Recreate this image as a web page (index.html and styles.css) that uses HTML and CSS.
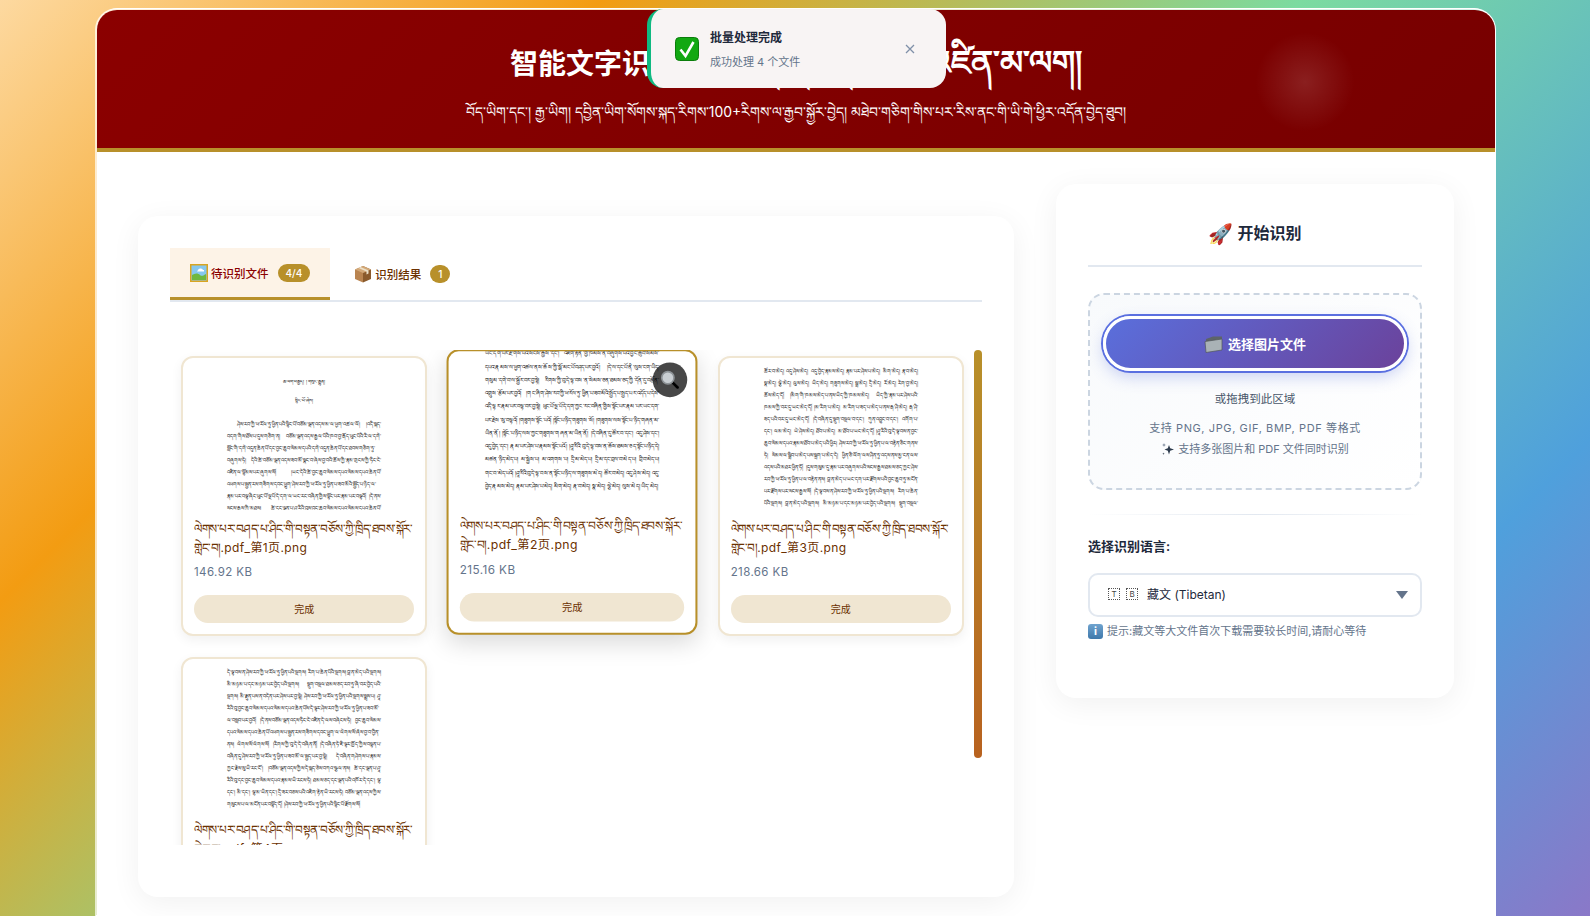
FILE: index.html
```html
<!DOCTYPE html>
<html lang="zh-CN">
<head>
    <meta charset="UTF-8">
    <meta name="viewport" content="width=device-width, initial-scale=1.0">
    <title>智能文字识别系统</title>
    <link rel="stylesheet" href="styles.css">
</head>
<body>
    <div class="container">
        <header class="header">
            <h1>智能文字识别系统<span class="title-bo">ཡིག་གཟུགས་ངོས་འཛིན་མ་ལག།</span></h1>
            <p>བོད་ཡིག་དང་། རྒྱ་ཡིག། དབྱིན་ཡིག་སོགས་སྐད་རིགས་100+རིགས་ལ་རྒྱབ་སྐྱོར་བྱེད། མཐེབ་གཅིག་གིས་པར་རིས་ནང་གི་ཡི་གེ་ཕྱིར་འདོན་བྱེད་ཐུབ།</p>
            <div class="glow"></div>
        </header>

        <div class="toast">
            <svg class="toast-icon" viewBox="0 0 24 24">
                <rect x="0.5" y="0.5" width="23" height="23" rx="4" fill="#12a812" stroke="#0b7d0b"/>
                <path d="M5.5 12.5l5 6.5 8-14" fill="none" stroke="#fff" stroke-width="2.6"/>
            </svg>
            <div class="toast-text">
                <strong>批量处理完成</strong>
                <span>成功处理 4 个文件</span>
            </div>
            <svg class="toast-close" viewBox="0 0 10 10">
                <path d="M1 1l8 8M9 1l-8 8" stroke="#8090a8" stroke-width="1.3"/>
            </svg>
        </div>

        <main class="main">
            <section class="files-panel">
                <div class="tabs">
                    <div class="tab active">
                        <svg class="tab-icon" viewBox="0 0 18 18">
                            <rect x="0.5" y="0.5" width="17" height="17" fill="#87c8ee" stroke="#d9a520" stroke-width="2"/>
                            <path d="M2 11c3-2 6-2 8 0s4 0 6-1v6H2z" fill="#6fb83f"/>
                            <path d="M8 6c1-2 4-2 5 0h1v1.500H7z" fill="#fff"/>
                        </svg>
                        待识别文件 <span class="badge">4/4</span>
                    </div>
                    <div class="tab">
                        <svg class="tab-icon" viewBox="0 0 18 18">
                            <path d="M9 1l8 3.500v9.500l-8 3.500z" fill="#8a5a2c"/>
                            <path d="M9 1l-8 3.500v9.500l8 3.500z" fill="#b98450"/>
                            <path d="M1 4.500l8 3.500 8-3.500-8-3.500z" fill="#d3a878"/>
                            <path d="M4.500 3l8 3.500v3l2-1v-3l-8-3.500z" fill="#ece0c8"/>
                        </svg>
                        识别结果 <span class="badge single">1</span>
                    </div>
                </div>
                <div class="list-wrap">
                    <div class="file-list">
                        <div class="file-card">
                            <div class="thumb first-page">
                                <div class="page-title">ཆ་ལག་བརྒྱད། ། གསུང་རྒྱུན།</div>
                                <div class="page-title">སྙིང་པོ་ཞེས།</div>
                                <p>ཤེས་རབ་ཀྱི་ཕ་རོལ་ཏུ་ཕྱིན་པའི་སྙིང་པོ་བཅོམ་ལྡན་འདས་མ་ལ་ཕྱག་འཚལ་ལོ། །འདི་སྐད་བདག་གིས་ཐོས་པ་དུས་གཅིག་ན། བཅོམ་ལྡན་འདས་རྒྱལ་པོའི་ཁབ་བྱ་རྒོད་ཕུང་པོའི་རི་ལ་དགེ་སློང་གི་དགེ་འདུན་ཆེན་པོ་དང་བྱང་ཆུབ་སེམས་དཔའི་དགེ་འདུན་ཆེན་པོ་དང་ཐབས་གཅིག་ཏུ་བཞུགས་ཏེ། དེའི་ཚེ་བཅོམ་ལྡན་འདས་ཟབ་མོ་སྣང་བ་ཞེས་བྱ་བའི་ཆོས་ཀྱི་རྣམ་གྲངས་ཀྱི་ཏིང་ངེ་འཛིན་ལ་སྙོམས་པར་ཞུགས་སོ། །ཡང་དེའི་ཚེ་བྱང་ཆུབ་སེམས་དཔའ་སེམས་དཔའ་ཆེན་པོ་འཕགས་པ་སྤྱན་རས་གཟིགས་དབང་ཕྱུག་ཤེས་རབ་ཀྱི་ཕ་རོལ་ཏུ་ཕྱིན་པ་ཟབ་མོའི་སྤྱོད་པ་ཉིད་ལ་རྣམ་པར་བལྟ་ཞིང་ཕུང་པོ་ལྔ་པོ་དེ་དག་ལ་ཡང་རང་བཞིན་གྱིས་སྟོང་པར་རྣམ་པར་བལྟའོ། །དེ་ནས་སངས་རྒྱས་ཀྱི་མཐུས། ཚེ་དང་ལྡན་པ་ཤཱ་རིའི་བུས་བྱང་ཆུབ་སེམས་དཔའ་སེམས་དཔའ་ཆེན་པོ་འཕགས་པ་སྤྱན་རས་གཟིགས་དབང་ཕྱུག་ལ་འདི་སྐད་ཅེས་སྨྲས་སོ།</p>
                            </div>
                            <div class="file-name"><span class="name-bo">ལེགས་པར་བཤད་པ་ཤིང་གི་བསྟན་བཅོས་ཀྱི་ཁྲིད་ཐབས་སྐོར་གླེང་བ།</span><span class="name-ext">.pdf_第1页.png</span></div>
                            <div class="file-size">146.92 KB</div>
                            <div class="status-btn">完成</div>
                        </div>

                        <div class="file-card hovered">
                            <div class="thumb cropped-page">
                                <p>ཡང་དག་པར་རྫོགས་པའི་སངས་རྒྱས་དང་། འཇིག་རྟེན་གྱི་ཁམས་ན་བཞུགས་པའི་བྱང་ཆུབ་སེམས་དཔའ་རྣམས་ལ་ཕྱག་འཚལ་ནས་ཆོས་ཀྱི་སྒོ་མང་པོ་བཤད་པར་བྱའོ། །དེ་ལ་དང་པོ་ནི་ལུས་ངག་ཡིད་གསུམ་དགེ་བ་ལ་སྦྱོར་བར་བྱ་སྟེ། རིགས་ཀྱི་བུ་དེ་ལྟ་བས་ན་སེམས་ཅན་ཐམས་ཅད་ཀྱི་དོན་དུ་བརྩོན་འགྲུས་རྩོམ་པར་བྱའོ། །གང་ཞིག་ཤེས་རབ་ཀྱི་ཕ་རོལ་ཏུ་ཕྱིན་པ་ཟབ་མོའི་སྤྱོད་པ་སྤྱད་པར་འདོད་པ་དེས་འདི་ལྟར་རྣམ་པར་བལྟ་བར་བྱ་སྟེ། ཕུང་པོ་ལྔ་པོ་དེ་དག་ཀྱང་རང་བཞིན་གྱིས་སྟོང་པར་རྣམ་པར་ཡང་དག་པར་རྗེས་སུ་བལྟའོ། །གཟུགས་སྟོང་པའོ། །སྟོང་པ་ཉིད་གཟུགས་སོ། །གཟུགས་ལས་སྟོང་པ་ཉིད་གཞན་མ་ཡིན་ནོ། །སྟོང་པ་ཉིད་ལས་ཀྱང་གཟུགས་གཞན་མ་ཡིན་ནོ། །དེ་བཞིན་དུ་ཚོར་བ་དང་། འདུ་ཤེས་དང་། འདུ་བྱེད་དང་། རྣམ་པར་ཤེས་པ་རྣམས་སྟོང་པའོ། །ཤཱ་རིའི་བུ་དེ་ལྟ་བས་ན་ཆོས་ཐམས་ཅད་སྟོང་པ་ཉིད་དེ། མཚན་ཉིད་མེད་པ། མ་སྐྱེས་པ། མ་འགགས་པ། དྲི་མ་མེད་པ། དྲི་མ་དང་བྲལ་བ་མེད་པ། བྲི་བ་མེད་པ། གང་བ་མེད་པའོ། །ཤཱ་རིའི་བུ་དེ་ལྟ་བས་ན་སྟོང་པ་ཉིད་ལ་གཟུགས་མེད། ཚོར་བ་མེད། འདུ་ཤེས་མེད། འདུ་བྱེད་རྣམས་མེད། རྣམ་པར་ཤེས་པ་མེད། མིག་མེད། རྣ་བ་མེད། སྣ་མེད། ལྕེ་མེད། ལུས་མེད། ཡིད་མེད།</p>
                            </div>
                            <span class="zoom-btn">
                                <svg viewBox="0 0 20 20">
                                    <path d="M11.500 11.500l6 6" stroke="#000" stroke-width="2.600" stroke-linecap="round"/>
                                    <circle cx="8" cy="8" r="6" fill="#c9ced2" stroke="#8d9296" stroke-width="1.600"/>
                                </svg>
                            </span>
                            <div class="file-name"><span class="name-bo">ལེགས་པར་བཤད་པ་ཤིང་གི་བསྟན་བཅོས་ཀྱི་ཁྲིད་ཐབས་སྐོར་གླེང་བ།</span><span class="name-ext">.pdf_第2页.png</span></div>
                            <div class="file-size">215.16 KB</div>
                            <div class="status-btn">完成</div>
                        </div>

                        <div class="file-card">
                            <div class="thumb">
                                <p>ཚོར་བ་མེད། འདུ་ཤེས་མེད། འདུ་བྱེད་རྣམས་མེད། རྣམ་པར་ཤེས་པ་མེད། མིག་མེད། རྣ་བ་མེད། སྣ་མེད། ལྕེ་མེད། ལུས་མེད། ཡིད་མེད། གཟུགས་མེད། སྒྲ་མེད། དྲི་མེད། རོ་མེད། རེག་བྱ་མེད། ཆོས་མེད་དོ། །མིག་གི་ཁམས་མེད་པ་ནས་ཡིད་ཀྱི་ཁམས་མེད། ཡིད་ཀྱི་རྣམ་པར་ཤེས་པའི་ཁམས་ཀྱི་བར་དུ་ཡང་མེད་དོ། །མ་རིག་པ་མེད། མ་རིག་པ་ཟད་པ་མེད་པ་ནས་རྒ་ཤི་མེད། རྒ་ཤི་ཟད་པའི་བར་དུ་ཡང་མེད་དོ། །དེ་བཞིན་དུ་སྡུག་བསྔལ་བ་དང་། ཀུན་འབྱུང་བ་དང་། འགོག་པ་དང་། ལམ་མེད། ཡེ་ཤེས་མེད། ཐོབ་པ་མེད། མ་ཐོབ་པ་ཡང་མེད་དོ། །ཤཱ་རིའི་བུ་དེ་ལྟ་བས་ན་བྱང་ཆུབ་སེམས་དཔའ་རྣམས་ཐོབ་པ་མེད་པའི་ཕྱིར། ཤེས་རབ་ཀྱི་ཕ་རོལ་ཏུ་ཕྱིན་པ་ལ་བརྟེན་ཅིང་གནས་ཏེ། སེམས་ལ་སྒྲིབ་པ་མེད་པས་སྐྲག་པ་མེད་དེ། ཕྱིན་ཅི་ལོག་ལས་ཤིན་ཏུ་འདས་ནས་མྱ་ངན་ལས་འདས་པའི་མཐར་ཕྱིན་ཏོ། །དུས་གསུམ་དུ་རྣམ་པར་བཞུགས་པའི་སངས་རྒྱས་ཐམས་ཅད་ཀྱང་ཤེས་རབ་ཀྱི་ཕ་རོལ་ཏུ་ཕྱིན་པ་ལ་བརྟེན་ནས། བླ་ན་མེད་པ་ཡང་དག་པར་རྫོགས་པའི་བྱང་ཆུབ་ཏུ་མངོན་པར་རྫོགས་པར་སངས་རྒྱས་སོ། །དེ་ལྟ་བས་ན་ཤེས་རབ་ཀྱི་ཕ་རོལ་ཏུ་ཕྱིན་པའི་སྔགས། རིག་པ་ཆེན་པོའི་སྔགས། བླ་ན་མེད་པའི་སྔགས། མི་མཉམ་པ་དང་མཉམ་པར་བྱེད་པའི་སྔགས། སྡུག་བསྔལ་ཐམས་ཅད་རབ་ཏུ་ཞི་བར་བྱེད་པའི་སྔགས།</p>
                            </div>
                            <div class="file-name"><span class="name-bo">ལེགས་པར་བཤད་པ་ཤིང་གི་བསྟན་བཅོས་ཀྱི་ཁྲིད་ཐབས་སྐོར་གླེང་བ།</span><span class="name-ext">.pdf_第3页.png</span></div>
                            <div class="file-size">218.66 KB</div>
                            <div class="status-btn">完成</div>
                        </div>

                        <div class="file-card">
                            <div class="thumb">
                                <p>དེ་ལྟ་བས་ན་ཤེས་རབ་ཀྱི་ཕ་རོལ་ཏུ་ཕྱིན་པའི་སྔགས། རིག་པ་ཆེན་པོའི་སྔགས། བླ་ན་མེད་པའི་སྔགས། མི་མཉམ་པ་དང་མཉམ་པར་བྱེད་པའི་སྔགས། སྡུག་བསྔལ་ཐམས་ཅད་རབ་ཏུ་ཞི་བར་བྱེད་པའི་སྔགས། མི་རྫུན་པས་ན་བདེན་པར་ཤེས་པར་བྱ་སྟེ། ཤེས་རབ་ཀྱི་ཕ་རོལ་ཏུ་ཕྱིན་པའི་སྔགས་སྨྲས་པ། ཤཱ་རིའི་བུ་བྱང་ཆུབ་སེམས་དཔའ་སེམས་དཔའ་ཆེན་པོས་དེ་ལྟར་ཤེས་རབ་ཀྱི་ཕ་རོལ་ཏུ་ཕྱིན་པ་ཟབ་མོ་ལ་བསླབ་པར་བྱའོ། །དེ་ནས་བཅོམ་ལྡན་འདས་ཏིང་ངེ་འཛིན་དེ་ལས་བཞེངས་ཏེ། བྱང་ཆུབ་སེམས་དཔའ་སེམས་དཔའ་ཆེན་པོ་འཕགས་པ་སྤྱན་རས་གཟིགས་དབང་ཕྱུག་ལ་ལེགས་སོ་ཞེས་བྱ་བ་བྱིན་ནས། ལེགས་སོ་ལེགས་སོ། །རིགས་ཀྱི་བུ་དེ་དེ་བཞིན་ནོ། །དེ་བཞིན་ཏེ་ཇི་ལྟར་ཁྱོད་ཀྱིས་བསྟན་པ་བཞིན་དུ་ཤེས་རབ་ཀྱི་ཕ་རོལ་ཏུ་ཕྱིན་པ་ཟབ་མོ་ལ་སྤྱད་པར་བྱ་སྟེ། དེ་བཞིན་གཤེགས་པ་རྣམས་ཀྱང་རྗེས་སུ་ཡི་རང་ངོ་། །བཅོམ་ལྡན་འདས་ཀྱིས་དེ་སྐད་ཅེས་བཀའ་སྩལ་ནས། ཚེ་དང་ལྡན་པ་ཤཱ་རིའི་བུ་དང་བྱང་ཆུབ་སེམས་དཔའ་རྣམས་ཡི་རངས་ཏེ། ཐམས་ཅད་དང་ལྡན་པའི་འཁོར་དེ་དང་། ལྷ་དང་། མི་དང་། ལྷ་མ་ཡིན་དང་། དྲི་ཟར་བཅས་པའི་འཇིག་རྟེན་ཡི་རངས་ཏེ། བཅོམ་ལྡན་འདས་ཀྱིས་གསུངས་པ་ལ་མངོན་པར་བསྟོད་དོ། །ཤེས་རབ་ཀྱི་ཕ་རོལ་ཏུ་ཕྱིན་པའི་སྙིང་པོ་རྫོགས་སོ།</p>
                            </div>
                            <div class="file-name"><span class="name-bo">ལེགས་པར་བཤད་པ་ཤིང་གི་བསྟན་བཅོས་ཀྱི་ཁྲིད་ཐབས་སྐོར་གླེང་བ།</span><span class="name-ext">.pdf_第4页.png</span></div>
                            <div class="file-size">203.41 KB</div>
                            <div class="status-btn">完成</div>
                        </div>
                    </div>
                    <div class="scroll-thumb"></div>
                </div>
            </section>

            <aside class="side-panel">
                <h2><span class="rocket">🚀</span> 开始识别</h2>
                <div class="drop-zone">
                    <div class="select-btn">
                        <svg class="folder-icon" viewBox="0 0 20 18">
                            <path d="M2 4l7-2.500h9v13l-16 2.500z" fill="#5d6468"/>
                            <path d="M1 6.500l17-2.500v11l-16 2.500z" fill="#a9b2b6" stroke="#50565a" stroke-width="0.700"/>
                        </svg>
                        选择图片文件
                    </div>
                    <p class="drop-main">或拖拽到此区域</p>
                    <p class="drop-note wide">支持 PNG, JPG, GIF, BMP, PDF 等格式</p>
                    <p class="drop-note">
                        <svg class="spark-icon" viewBox="0 0 14 14">
                            <path d="M8 3l1.200 3.300 3.800 1.200-3.800 1.200-1.200 3.800-1.200-3.800-3.300-1.200 3.300-1.200z" fill="#2c3a4c"/>
                            <path d="M3 1l.5 1.500 1.500.5-1.500.5-.5 1.500-.5-1.500-1.500-.5 1.500-.5z" fill="#6d7c90"/>
                            <path d="M2.500 10.500l.3 1 1 .3-1 .3-.3 1-.3-1-1-.3 1-.3z" fill="#2c3a4c"/>
                        </svg>
                        支持多张图片和 PDF 文件同时识别
                    </p>
                </div>
                <div class="divider"></div>
                <label class="lang-label">选择识别语言:</label>
                <div class="lang-select">
                    <span class="flag-box">T</span><span class="flag-box">B</span>
                    <span class="lang-name">藏文 (Tibetan)</span>
                    <i class="arrow"></i>
                </div>
                <p class="hint">
                    <span class="info-icon">i</span>
                    提示:藏文等大文件首次下载需要较长时间,请耐心等待
                </p>
            </aside>
        </main>
    </div>
</body>
</html>
```

FILE: styles.css
```css
* {
    box-sizing: border-box;
}

html, body {
    height: 100%;
    overflow: hidden;
}

body {
    margin: 0;
    padding-top: 8px;
    font-family: 'Inter', 'DejaVu Sans', 'Noto Sans CJK SC', sans-serif;
    background: linear-gradient(135deg, #fdd9a0 0%, #f39c12 24%, #7bdba0 52%, #4fa0dc 81%, #8a78c8 100%);
}

.container {
    position: relative;
    width: 1400px;
    height: 908px;
    margin: 0 auto;
    background-color: #fff;
    background-clip: padding-box;
    border: 2px solid rgba(255, 255, 255, 0.7);
    border-right: 0;
    border-bottom: 0;
    border-radius: 22px 22px 0 0;
    box-shadow: 1px 0 0 #fff;
}

.header {
    position: relative;
    height: 142px;
    padding-top: 26px;
    overflow: hidden;
    text-align: center;
    color: #fff;
    background: linear-gradient(135deg, #8b0000, #770000);
    border-bottom: 4px solid #b8902a;
    border-radius: 20px 20px 0 0;
}

.header h1 {
    margin: 0;
    font-size: 28px;
    line-height: 52px;
    font-weight: 700;
    white-space: nowrap;
}

.title-bo {
    font-size: 33px;
}

.header p {
    margin: 9px 0 0;
    font-size: 13.900px;
    line-height: 26px;
    white-space: nowrap;
}

.glow {
    position: absolute;
    top: 22px;
    right: 140px;
    width: 100px;
    height: 100px;
    border-radius: 50%;
    background: radial-gradient(circle, rgba(255, 255, 255, 0.12), rgba(255, 255, 255, 0) 70%);
}

.toast {
    position: absolute;
    top: -1px;
    left: 550px;
    display: flex;
    align-items: center;
    width: 299px;
    height: 79px;
    padding: 0 24px;
    background-color: #f8f4f4;
    border-left: 4px solid #10b981;
    border-radius: 16px;
}

.toast-icon {
    width: 24px;
    height: 24px;
    margin-right: 11px;
}

.toast-text {
    flex: 1;
    display: flex;
    flex-direction: column;
    gap: 8px;
    font-size: 11px;
    color: #64748b;
}

.toast-text strong {
    font-size: 12px;
    color: #1e293b;
}

.toast-close {
    width: 10px;
    height: 10px;
    margin-right: 7px;
}

.main {
    display: grid;
    grid-template-columns: 1fr 398px;
    align-items: start;
    gap: 42px;
    padding: 32px 41px 0;
}

.files-panel {
    margin-top: 32px;
    height: 681px;
    padding: 32px;
    background-color: #fff;
    border-radius: 20px;
    box-shadow: 0 6px 30px rgba(0, 0, 0, 0.06);
}

.tabs {
    display: flex;
    gap: 4px;
    height: 54px;
    border-bottom: 2px solid #e2e8f0;
}

.tab {
    display: flex;
    align-items: center;
    height: 52px;
    padding: 0 20px;
    font-size: 11.500px;
    font-weight: 500;
    color: #6b3000;
}

.tab.active {
    color: #8b0000;
    background-color: #fdf3e7;
    border-bottom: 3px solid #b8902a;
}

.tab-icon {
    width: 18px;
    height: 18px;
    margin-right: 3px;
}

.badge {
    margin-left: 9px;
    padding: 2px 8px;
    font-size: 10px;
    line-height: 14px;
    color: #fff;
    background-color: #b8902a;
    border-radius: 10px;
}

.badge.single {
    padding: 2px 8px;
}

.list-wrap {
    position: relative;
    margin-top: 48px;
}

.file-list {
    display: grid;
    grid-template-columns: repeat(3, 1fr);
    align-items: start;
    gap: 21px 22px;
    height: 495px;
    padding: 6px 18px 14px 11px;
    overflow: hidden;
}

.scroll-thumb {
    position: absolute;
    top: 0;
    right: 0;
    width: 8px;
    height: 408px;
    background: linear-gradient(180deg, #b8902a, #b8621f);
    border-radius: 4px;
}

.file-card {
    height: 280px;
    padding: 0 11px;
    background-color: #fff;
    border: 2px solid #f0e6d2;
    border-radius: 12px;
    box-shadow: 0 4px 12px rgba(0, 0, 0, 0.06);
}

.file-card.hovered {
    position: relative;
    border-color: #b8902a;
    transform: translateY(-4px) scale(1.02);
    box-shadow: 0 8px 24px rgba(0, 0, 0, 0.15);
}

.thumb {
    height: 152px;
    margin-bottom: 9px;
    padding: 7px 33px 0;
    overflow: hidden;
    font-family: 'DejaVu Sans', sans-serif;
    color: #000;
}

.thumb p {
    margin: 0;
    font-size: 5px;
    line-height: 12px;
    text-align: justify;
}

.first-page {
    padding-top: 18px;
}

.page-title {
    margin-bottom: 7px;
    font-size: 4.600px;
    line-height: 12px;
    text-align: center;
}

.first-page p {
    margin-top: 11px;
    text-indent: 10px;
}

.cropped-page {
    padding: 0 25px;
}

.cropped-page p {
    margin-top: -4px;
    font-size: 5.400px;
    line-height: 13px;
}

.zoom-btn {
    position: absolute;
    top: 11px;
    right: 8px;
    display: flex;
    align-items: center;
    justify-content: center;
    width: 34px;
    height: 34px;
    background-color: rgba(0, 0, 0, 0.72);
    border-radius: 50%;
}

.zoom-btn svg {
    width: 20px;
    height: 20px;
}

.file-name {
    height: 38px;
    font-size: 12px;
    line-height: 19px;
    color: #6b3000;
    word-break: break-all;
}

.name-bo {
    letter-spacing: -0.500px;
}

.name-ext {
    letter-spacing: 0.400px;
}

.file-size {
    margin-top: 7px;
    font-size: 11.500px;
    line-height: 16px;
    letter-spacing: 0.400px;
    color: #64748b;
}

.status-btn {
    height: 28px;
    margin-top: 15px;
    font-size: 10px;
    line-height: 28px;
    text-align: center;
    color: #6b3000;
    background-color: #f0e6d2;
    border-radius: 14px;
}

.side-panel {
    height: 514px;
    padding: 32px;
    background-color: #fff;
    border-radius: 20px;
    box-shadow: 0 6px 30px rgba(0, 0, 0, 0.06);
}

.side-panel h2 {
    height: 51px;
    margin: 0;
    font-size: 16px;
    line-height: 34px;
    font-weight: 600;
    text-align: center;
    color: #1e293b;
    border-bottom: 2px solid #e2e8f0;
}

.rocket {
    font-size: 20px;
    vertical-align: -2px;
}

.drop-zone {
    height: 197px;
    margin-top: 26px;
    padding: 21px 13px 0;
    text-align: center;
    background: linear-gradient(135deg, #f8fafc, #fff);
    border: 2px dashed #cbd5e1;
    border-radius: 16px;
}

.select-btn {
    display: flex;
    align-items: center;
    justify-content: center;
    height: 55px;
    font-size: 13px;
    font-weight: 700;
    color: #fff;
    background: linear-gradient(135deg, #5a6fdc, #6b429b);
    border: 3px solid #fff;
    border-radius: 30px;
    box-shadow: 0 0 0 2px #5a6fe0, 0 6px 16px rgba(90, 111, 220, 0.3);
}

.folder-icon {
    width: 20px;
    height: 18px;
    margin-right: 4px;
}

.drop-main {
    margin: 18px 0 0;
    font-size: 11.500px;
    line-height: 20px;
    color: #475569;
}

.drop-note {
    margin: 0;
    font-size: 11px;
    line-height: 21px;
    color: #64748b;
}

.drop-note.wide {
    letter-spacing: 0.600px;
}

.drop-main + .drop-note {
    margin-top: 9px;
}

.spark-icon {
    width: 14px;
    height: 14px;
    vertical-align: -3px;
}

.divider {
    height: 1px;
    margin-top: 24px;
    background: linear-gradient(90deg, #fff, #e2e8f0, #fff);
}

.lang-label {
    display: block;
    margin-top: 21px;
    font-size: 13px;
    font-weight: 600;
    line-height: 20px;
    color: #1e293b;
}

.lang-select {
    position: relative;
    display: flex;
    align-items: center;
    height: 44px;
    margin-top: 17px;
    padding: 0 18px 3px;
    font-size: 12px;
    color: #1e293b;
    background-color: #fff;
    border: 2px solid #e2e8f0;
    border-radius: 10px;
}

.flag-box {
    width: 12px;
    height: 12px;
    margin-right: 6px;
    font-size: 8px;
    line-height: 10px;
    text-align: center;
    color: #444;
    border: 1px dotted #555;
}

.lang-name {
    margin-left: 3px;
}

.arrow {
    position: absolute;
    top: 16px;
    right: 12px;
    border-left: 6px solid transparent;
    border-right: 6px solid transparent;
    border-top: 8px solid #64748b;
}

.hint {
    display: flex;
    align-items: center;
    gap: 4px;
    margin: 5px 0 0;
    font-size: 11px;
    line-height: 18px;
    color: #64748b;
}

.info-icon {
    width: 15px;
    height: 15px;
    font-size: 11px;
    font-weight: 700;
    line-height: 15px;
    text-align: center;
    color: #fff;
    background: linear-gradient(180deg, #6fa3cf, #3f78aa);
    border-radius: 3px;
}
```
